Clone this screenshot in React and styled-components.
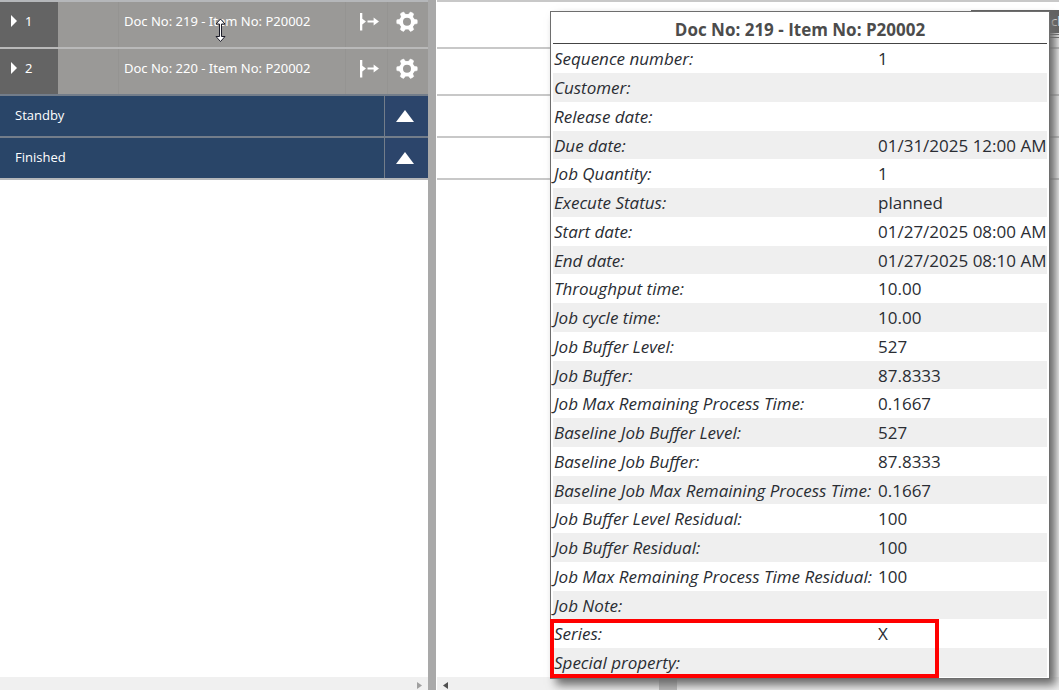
import React from "react";
import styled, { createGlobalStyle } from "styled-components";

const Global = createGlobalStyle`
  *, *::before, *::after { box-sizing: border-box; }
  html, body { margin: 0; height: 100%; }
  #root { height: 100%; }
  body { font-family: "Open Sans", "Noto Sans", sans-serif; background: #fff; overflow: hidden; }
  button { border: 0; padding: 0; margin: 0; background: none; color: inherit; font: inherit; cursor: pointer; }
`;

const Page = styled.div`
  display: flex;
  height: 100%;
  min-height: 100vh;
`;

const Pane = styled.section`
  position: relative;
  display: flex;
  flex-direction: column;
  min-width: 0;
  flex: ${(p) => (p.$grow ? "1 1 0" : "0 0 428px")};
  margin-left: ${(p) => (p.$grow ? "1px" : "0")};
`;

const Splitter = styled.div`
  flex: 0 0 8px;
  background: #a9a9a9;
  cursor: col-resize;
`;

const Rows = styled.div`
  flex: 1;
  border-top: 2px solid ${(p) => (p.$light ? "#c8c8c8" : "#b5b7ba")};
`;

const JobRow = styled.div`
  display: flex;
  height: 47px;
  background: #9a9997;
  border-bottom: 2px solid ${(p) => (p.$last ? "#737d8a" : "#b9b9b9")};
  color: #fff;
  font-family: "Noto Sans", "Open Sans", sans-serif;
  font-size: 13px;
  line-height: 18px;
`;

const Expander = styled.button`
  display: flex;
  flex: 0 0 58px;
  align-items: center;
  gap: 8px;
  && { background: #646464; padding: 0 0 7px 11px; }
`;

const StatusCell = styled.div`
  flex: 0 0 61px;
  border-right: 1px solid #959492;
`;

const JobName = styled.div`
  flex: 1;
  padding: 10px 0 0 5px;
  white-space: nowrap;
`;

const IconButton = styled.button`
  display: flex;
  flex: 0 0 ${(p) => p.$width}px;
  && { padding: 9px 0 0 ${(p) => p.$inset}px; border-left: 1px solid #959492; }
`;

const GroupRow = styled.div`
  display: flex;
  height: 42px;
  background: #294568;
  border-bottom: 2px solid ${(p) => (p.$last ? "#b5b7ba" : "#737d8a")};
  color: #fff;
  font-size: 13px;
  line-height: 18px;
`;

const GroupName = styled.div`
  flex: 1;
  padding: 10px 15px;
`;

const GroupToggle = styled.button`
  display: flex;
  flex: 0 0 44px;
  align-items: center;
  justify-content: center;
  && { background: #2c456b; border-left: 1px solid #737d8a; padding-right: 3px; }
`;

const Lane = styled.div`
  height: ${(p) => p.$height}px;
  border-bottom: 2px solid #c8c8c8;
`;

const ScrollTrack = styled.div`
  display: flex;
  flex: 0 0 13px;
  align-items: center;
  justify-content: ${(p) => (p.$end ? "flex-end" : "flex-start")};
  padding: 4px 6px 0;
  background: #f0f0f0;
`;

const ScrollThumb = styled.div`
  width: 18px;
  height: 13px;
  margin: -4px 0 0 211px;
  background: #bdbdbd;
`;

const JobBar = styled.div`
  position: absolute;
  top: 10px;
  left: 534px;
  width: 160px;
  height: 23px;
  padding-left: 80px;
  background: #626262;
  color: #fff;
  font-size: 13px;
  line-height: 23px;
`;

const JobBarTrack = styled.div`
  position: absolute;
  top: 34px;
  left: 534px;
  width: 160px;
  height: 4px;
  border: solid #6f6f6f;
  border-width: 1px 0;
`;

const Clip = styled.div`
  position: absolute;
  inset: 0;
  overflow: hidden;
`;

const Tooltip = styled.div`
  position: absolute;
  top: 11px;
  left: 113px;
  width: 500px;
  padding: 0 2px 1px;
  border: 1px solid #6e6e6e;
  background: #fff;
  box-shadow: 6px 6px 9px 0 #6a6a6a;
`;

const Details = styled.table`
  width: 100%;
  border-collapse: collapse;
  table-layout: fixed;
  color: #2a2d33;
  font-size: 17px;
  line-height: 26px;
`;

const Title = styled.caption`
  height: 32px;
  padding-top: 4px;
  border-bottom: 1px solid #444;
  color: #4c4c4c;
  font-size: 17px;
  font-weight: 700;
  line-height: 27px;
`;

const DetailRow = styled.tr`
  height: 29px;
  &:nth-child(even) { background: #efefef; }
  &:nth-child(4n) { height: 28px; }
`;

const Label = styled.th`
  width: 324px;
  padding: 1px 0 0 1px;
  font-style: italic;
  font-weight: 400;
  text-align: left;
  white-space: nowrap;
`;

const Value = styled.td`
  padding: 1px 0 0 1px;
  white-space: nowrap;
`;

const Highlight = styled.div`
  position: absolute;
  left: -1px;
  bottom: 0;
  width: 389px;
  height: 59px;
  border: 4px solid #f00;
  pointer-events: none;
`;

const Cursor = styled.svg`
  position: absolute;
  top: 18px;
  left: 215px;
`;

const ArrowRight = () => (
  <svg width="6" height="12" viewBox="0 0 6 12" aria-hidden="true">
    <path d="M0 0 6 6 0 12Z" fill="#fff" />
  </svg>
);

const MoveIcon = () => (
  <svg width="20" height="22" viewBox="0 0 20 22" aria-hidden="true">
    <path d="M1 2h2.300V7.800L7 10.500 3.300 13.400V19.500H1Z" fill="#fff" />
    <path d="M8.500 9.500h8v2h-8Z" fill="#fff" />
    <path d="M14.600 6.500 20 10.500l-5.400 4Z" fill="#fff" />
  </svg>
);

const teeth = [30, 90, 150, 210, 270, 330];
const GearIcon = () => (
  <svg width="22" height="22" viewBox="0 0 22 22" aria-hidden="true">
    <circle cx="11" cy="10.700" r="5.900" fill="none" stroke="#fff" strokeWidth="3.800" />
    {teeth.map((a) => (
      <path key={a} d="M8.500 4.500 9.100 .9Q11 .4 12.900 .9L13.500 4.500Z" fill="#fff" stroke="#fff" strokeWidth=".5" strokeLinejoin="round" transform={`translate(0 -.3) rotate(${a} 11 11)`} />
    ))}
  </svg>
);

const Triangle = () => (
  <svg width="18" height="12" viewBox="0 0 18 12" aria-hidden="true">
    <path d="M9 0 18 12H0Z" fill="#fff" />
  </svg>
);

const ScrollArrow = ({ left }) => (
  <svg width="5" height="7" viewBox="0 0 5 7" aria-hidden="true">
    <path d={left ? "M5 0v7L0 3.500Z" : "M0 0v7l5-3.500Z"} fill={left ? "#505050" : "#a0a0a0"} />
  </svg>
);

const jobs = [
  { n: 1, name: "Doc No: 219 - Item No: P20002" },
  { n: 2, name: "Doc No: 220 - Item No: P20002" },
];
const groups = ["Standby", "Finished"];
const details = [
  ["Sequence number:", "1"],
  ["Customer:", ""],
  ["Release date:", ""],
  ["Due date:", "01/31/2025 12:00 AM"],
  ["Job Quantity:", "1"],
  ["Execute Status:", "planned"],
  ["Start date:", "01/27/2025 08:00 AM"],
  ["End date:", "01/27/2025 08:10 AM"],
  ["Throughput time:", "10.00"],
  ["Job cycle time:", "10.00"],
  ["Job Buffer Level:", "527"],
  ["Job Buffer:", "87.8333"],
  ["Job Max Remaining Process Time:", "0.1667"],
  ["Baseline Job Buffer Level:", "527"],
  ["Baseline Job Buffer:", "87.8333"],
  ["Baseline Job Max Remaining Process Time:", "0.1667"],
  ["Job Buffer Level Residual:", "100"],
  ["Job Buffer Residual:", "100"],
  ["Job Max Remaining Process Time Residual:", "100"],
  ["Job Note:", ""],
  ["Series:", "X"],
  ["Special property:", ""],
];

export default function App() {
  return (
    <>
      <Global />
      <Page>
        <Pane>
          <Rows>
            {jobs.map((job, i) => (
              <JobRow key={job.n} $last={i === jobs.length - 1}>
                <Expander><ArrowRight />{job.n}</Expander>
                <StatusCell />
                <JobName>{job.name}</JobName>
                <IconButton $width={42} $inset={13} aria-label="Move job"><MoveIcon /></IconButton>
                <IconButton $width={41} $inset={8} aria-label="Job settings"><GearIcon /></IconButton>
              </JobRow>
            ))}
            {groups.map((name, i) => (
              <GroupRow key={name} $last={i === groups.length - 1}>
                <GroupName>{name}</GroupName>
                <GroupToggle aria-label={`Toggle ${name}`}><Triangle /></GroupToggle>
              </GroupRow>
            ))}
          </Rows>
          <ScrollTrack $end><ScrollArrow /></ScrollTrack>
          <Cursor width="12" height="26" viewBox="0 0 12 26" aria-hidden="true">
            <path d="M5.500 1 10 6H6.500V18.500H10L5.500 23.500 1 18.500H4.500V6H1Z" fill="#fff" stroke="#1c1c28" strokeWidth="1" />
          </Cursor>
        </Pane>
        <Splitter />
        <Pane $grow>
          <Rows $light>
            <Lane $height={47} />
            <Lane $height={47} />
            <Lane $height={42} />
            <Lane $height={42} />
          </Rows>
          <ScrollTrack><ScrollArrow left /><ScrollThumb /></ScrollTrack>
          <Clip>
            <JobBar>ch</JobBar>
            <JobBarTrack />
          </Clip>
          <Tooltip role="tooltip">
            <Details>
              <Title>Doc No: 219 - Item No: P20002</Title>
              <tbody>
                {details.map(([label, value]) => (
                  <DetailRow key={label}>
                    <Label scope="row">{label}</Label>
                    <Value>{value}</Value>
                  </DetailRow>
                ))}
              </tbody>
            </Details>
            <Highlight />
          </Tooltip>
        </Pane>
      </Page>
    </>
  );
}
